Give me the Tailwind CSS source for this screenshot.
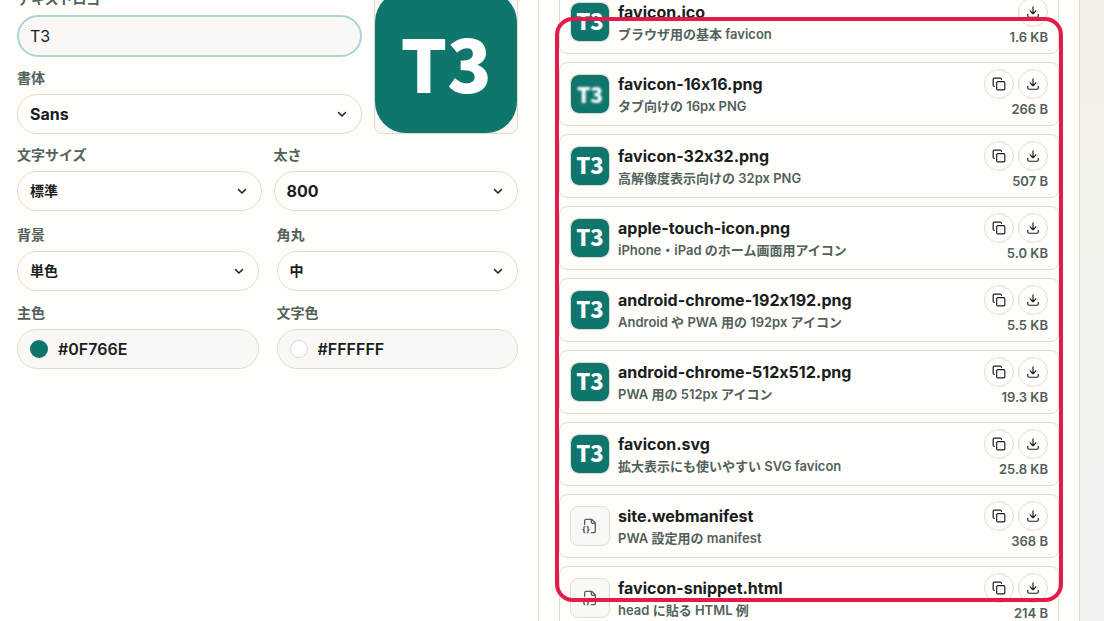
<!DOCTYPE html>
<html lang="ja">
<head>
    <meta charset="UTF-8">
    <meta name="viewport" content="width=device-width, initial-scale=1.0">
    <title>Favicon Generator</title>
    <script src="https://cdn.jsdelivr.net/npm/@tailwindcss/browser@4"></script>
</head>
<body class="h-screen overflow-hidden bg-linear-to-b from-[#f4efe8] to-[#f3f2ef] pr-6 font-['Inter','Noto_Sans_CJK_JP',sans-serif] text-[#18201f]">
    <svg class="hidden">
        <symbol id="chevron" viewBox="0 0 24 24" fill="none" stroke="currentColor" stroke-width="3" stroke-linecap="round" stroke-linejoin="round">
            <path d="m5 9 7 7 7-7" />
        </symbol>
        <symbol id="copy" viewBox="0 0 24 24" fill="none" stroke="currentColor" stroke-width="2" stroke-linecap="round" stroke-linejoin="round">
            <rect x="8" y="8" width="14" height="14" rx="2" />
            <path d="M4 16c-1.1 0-2-.9-2-2V4c0-1.1.9-2 2-2h10c1.1 0 2 .9 2 2" />
        </symbol>
        <symbol id="download" viewBox="0 0 24 24" fill="none" stroke="currentColor" stroke-width="2" stroke-linecap="round" stroke-linejoin="round">
            <path d="M12 3v12M7 10l5 5 5-5M21 16v3a2 2 0 0 1-2 2H5a2 2 0 0 1-2-2v-3" />
        </symbol>
        <symbol id="file-json" viewBox="0 0 24 24" fill="none" stroke="currentColor" stroke-width="2" stroke-linecap="round" stroke-linejoin="round">
            <path d="M4 9.5V4a2 2 0 0 1 2-2h8.5L20 7.5V20a2 2 0 0 1-2 2h-4" />
            <path d="M14 2v4a2 2 0 0 0 2 2h4" />
            <path d="M4 13c-1.5 0-1 2-1 3s-.5 1.5-1.500 1.5c1 0 1.500.5 1.500 1.5s-.5 3 1 3" />
            <path d="M8 22c1.500 0 1-2 1-3s.5-1.500 1.500-1.500c-1 0-1.500-.5-1.500-1.500s.5-3-1-3" />
        </symbol>
    </svg>

    <main class="grid min-h-full grid-cols-[538fr_541fr] border-r border-[#dfddd2] bg-[#fffefa]">
        <!-- Settings -->
        <section class="-mt-[11px] pr-5 pl-[17px]">
            <div class="flex items-end gap-3">
                <div class="grow">
                    <label for="logoText" class="block text-sm leading-5 font-bold text-[#52615d]">テキストロゴ</label>
                    <input id="logoText" type="text" value="T3" class="mt-[6px] block h-[42px] w-full rounded-full border-2 border-[#a9d5d6] bg-[#f9f8f5] px-[11px] text-base outline-none">
                    <label for="fontFamily" class="mt-[11px] block text-sm leading-5 font-bold text-[#52615d]">書体</label>
                    <div class="relative mt-[6px]">
                        <select id="fontFamily" class="h-10 w-full appearance-none rounded-full border border-[#dfddd2] bg-[#fffefa] px-3 text-base font-bold">
                            <option>Sans</option>
                        </select>
                        <svg class="pointer-events-none absolute top-[14px] right-[14px] size-3"><use href="#chevron" /></svg>
                    </div>
                </div>
                <div class="size-36 shrink-0 overflow-hidden rounded-lg border border-[#dfddd2] bg-[#f9f8f5]">
                    <svg viewBox="0 0 142 142" class="size-full" role="img" aria-label="T3">
                        <rect width="142" height="142" rx="31" fill="#0f766e" />
                        <text x="71" y="102" text-anchor="middle" class="fill-white font-['Noto_Sans_CJK_JP'] text-[73px] font-extrabold">T3</text>
                    </svg>
                </div>
            </div>

            <div class="mt-[11px] grid grid-cols-2 gap-3">
                <div>
                    <label for="fontSize" class="block text-sm leading-5 font-bold text-[#52615d]">文字サイズ</label>
                    <div class="relative mt-[6px]">
                        <select id="fontSize" class="h-10 w-full appearance-none rounded-full border border-[#dfddd2] bg-[#fffefa] px-3 text-sm font-bold">
                            <option>標準</option>
                        </select>
                        <svg class="pointer-events-none absolute top-[14px] right-[14px] size-3"><use href="#chevron" /></svg>
                    </div>
                </div>
                <div>
                    <label for="fontWeight" class="block text-sm leading-5 font-bold text-[#52615d]">太さ</label>
                    <div class="relative mt-[6px]">
                        <select id="fontWeight" class="h-10 w-full appearance-none rounded-full border border-[#dfddd2] bg-[#fffefa] px-3 text-base font-bold">
                            <option>800</option>
                        </select>
                        <svg class="pointer-events-none absolute top-[14px] right-[14px] size-3"><use href="#chevron" /></svg>
                    </div>
                </div>
            </div>

            <div class="mt-[14px] grid grid-cols-2 gap-x-[18px] gap-y-3">
                <div>
                    <label for="background" class="block text-sm leading-5 font-bold text-[#52615d]">背景</label>
                    <div class="relative mt-[6px]">
                        <select id="background" class="h-10 w-full appearance-none rounded-full border border-[#dfddd2] bg-[#fffefa] px-3 text-sm font-bold">
                            <option>単色</option>
                        </select>
                        <svg class="pointer-events-none absolute top-[14px] right-[14px] size-3"><use href="#chevron" /></svg>
                    </div>
                </div>
                <div>
                    <label for="radius" class="block text-sm leading-5 font-bold text-[#52615d]">角丸</label>
                    <div class="relative mt-[6px]">
                        <select id="radius" class="h-10 w-full appearance-none rounded-full border border-[#dfddd2] bg-[#fffefa] px-3 text-sm font-bold">
                            <option>中</option>
                        </select>
                        <svg class="pointer-events-none absolute top-[14px] right-[14px] size-3"><use href="#chevron" /></svg>
                    </div>
                </div>
                <div>
                    <label for="mainColor" class="block text-sm leading-5 font-bold text-[#52615d]">主色</label>
                    <div class="mt-[6px] flex h-10 items-center gap-[10px] rounded-full border border-[#dfddd2] bg-[#f9f8f5] px-3">
                        <span class="size-[18px] shrink-0 rounded-full bg-[#0f766e]"></span>
                        <input id="mainColor" type="text" value="#0F766E" class="w-full min-w-0 bg-transparent text-base font-semibold outline-none">
                    </div>
                </div>
                <div>
                    <label for="textColor" class="block text-sm leading-5 font-bold text-[#52615d]">文字色</label>
                    <div class="mt-[6px] flex h-10 items-center gap-[10px] rounded-full border border-[#dfddd2] bg-[#f9f8f5] px-3">
                        <span class="size-[18px] shrink-0 rounded-full border border-[#dcdcdc] bg-white"></span>
                        <input id="textColor" type="text" value="#FFFFFF" class="w-full min-w-0 bg-transparent text-base font-semibold outline-none">
                    </div>
                </div>
            </div>
        </section>

        <!-- Generated files -->
        <section class="relative border-l border-[#dfddd2] px-5">
            <ul id="fileList" class="-mt-[10px] flex flex-col gap-2"></ul>
            <div class="pointer-events-none absolute top-[17px] right-4 left-4 h-[585px] rounded-[18px] border-4 border-[#e31b4b]"></div>
        </section>
    </main>

    <script>
        const files = [
            { name: 'favicon.ico', note: 'ブラウザ用の基本 favicon', size: '1.6 KB', icon: 'logo', copy: false },
            { name: 'favicon-16x16.png', note: 'タブ向けの 16px PNG', size: '266 B', icon: 'small', copy: true },
            { name: 'favicon-32x32.png', note: '高解像度表示向けの 32px PNG', size: '507 B', icon: 'logo', copy: true },
            { name: 'apple-touch-icon.png', note: 'iPhone・iPad のホーム画面用アイコン', size: '5.0 KB', icon: 'logo', copy: true },
            { name: 'android-chrome-192x192.png', note: 'Android や PWA 用の 192px アイコン', size: '5.5 KB', icon: 'logo', copy: true },
            { name: 'android-chrome-512x512.png', note: 'PWA 用の 512px アイコン', size: '19.3 KB', icon: 'logo', copy: true },
            { name: 'favicon.svg', note: '拡大表示にも使いやすい SVG favicon', size: '25.8 KB', icon: 'logo', copy: true },
            { name: 'site.webmanifest', note: 'PWA 設定用の manifest', size: '368 B', icon: 'file', copy: true },
            { name: 'favicon-snippet.html', note: 'head に貼る HTML 例', size: '214 B', icon: 'file', copy: true }
        ];

        const icons = {
            logo: `<svg viewBox="0 0 38 38" class="size-full"><rect width="38" height="38" rx="8" fill="#0f766e" /><text x="19" y="27" text-anchor="middle" class="fill-white font-['Noto_Sans_CJK_JP'] text-[22px] font-extrabold">T3</text></svg>`,
            small: `<svg viewBox="0 0 38 38" class="size-full"><rect width="38" height="38" rx="8" fill="#0f766e" /><text x="19" y="28" text-anchor="middle" class="fill-white font-['Noto_Sans_CJK_JP'] text-[21px] font-extrabold blur-[1px]">T3</text></svg>`,
            file: `<svg class="size-4 text-[#52615d]"><use href="#file-json" /></svg>`
        };

        const buttonClass = 'flex size-[30px] items-center justify-center rounded-full border border-[#dfddd2] bg-[#fffefa]';

        document.getElementById('fileList').innerHTML = files.map(file => `
            <li class="flex h-16 items-center gap-2 rounded-lg border border-[#dfddd2] px-[10px]">
                <div class="flex size-10 shrink-0 items-center justify-center overflow-hidden rounded-lg border border-[#dfddd2] bg-[#f9f8f5]">${icons[file.icon]}</div>
                <div class="min-w-0 grow">
                    <p class="truncate text-base leading-6 font-bold [font-feature-settings:'calt'_0]">${file.name}</p>
                    <p class="truncate text-[13px] leading-5 font-semibold text-[#52615d]">${file.note}</p>
                </div>
                <div class="flex shrink-0 flex-col items-end">
                    <div class="flex gap-1">
                        ${file.copy ? `<button type="button" aria-label="コピー" class="${buttonClass}"><svg class="size-[14px]"><use href="#copy" /></svg></button>` : ''}
                        <button type="button" aria-label="ダウンロード" class="${buttonClass}"><svg class="size-[14px]"><use href="#download" /></svg></button>
                    </div>
                    <p class="text-[13px] leading-5 font-semibold text-[#52615d]">${file.size}</p>
                </div>
            </li>
        `).join('');
    </script>
</body>
</html>
